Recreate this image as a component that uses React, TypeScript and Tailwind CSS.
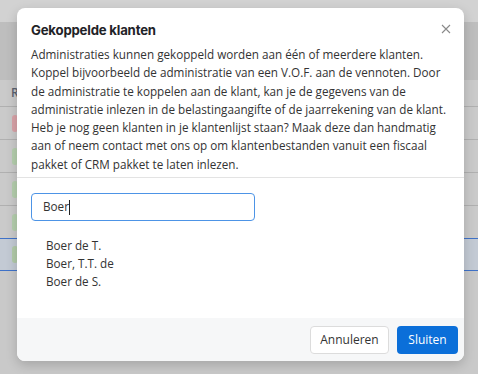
import React from "react";

const rows = [
  { badge: "bg-[#d9a3a8]" },
  { badge: "bg-[#b5cfae]" },
  { badge: "bg-[#b5cfae]" },
  { badge: "bg-[#b5cfae]" },
];

export default function App() {
  return (
    <div
      className="relative w-[478px] h-[374px] overflow-hidden bg-[#c9c9c9]"
      style={{ fontFamily: '"Open Sans", "Noto Sans", sans-serif' }}
    >
      {/* background page (dimmed) */}
      <div className="flex flex-col">
        <div className="h-[22px] bg-[#d2d2d2]" />
        <div className="h-[58px] bg-[#bebebe]" />
        <div className="h-[27px] flex items-center pl-[11px] text-[12px] font-semibold text-[#5b6270] border-b border-[#b0b0b0] bg-[#cacaca]">
          R
        </div>
        {rows.map((r, i) => (
          <div
            key={i}
            className="h-[33px] flex items-center pl-[12px] border-b border-[#b0b0b0] bg-[#cacaca]"
          >
            <div className={`w-[6px] h-[17px] rounded-[3px] ${r.badge}`} />
          </div>
        ))}
        <div className="h-[33px] flex items-center pl-[12px] border-y border-[#3f72c8] bg-[#c3cad4] -mt-px">
          <div className="w-[6px] h-[17px] rounded-[3px] bg-[#b2cba9]" />
        </div>
        <div className="flex-1 bg-[#c9c9c9]" />
      </div>

      {/* modal */}
      <div className="absolute left-[17px] top-[8px] w-[447px] h-[353px] bg-white rounded-[8px] shadow-[0_4px_12px_rgba(0,0,0,0.18)] flex flex-col overflow-hidden">
        <div className="relative px-[14px] pt-[12px] pb-[4px] border-b border-[#e3e3e3]">
          <div
            className="text-[13.2px] leading-[20px] font-bold tracking-[-0.2px] text-[#1f2328]"
            style={{ fontFamily: '"Inter", "Open Sans", sans-serif' }}
          >
            Gekoppelde klanten
          </div>
          <button className="absolute right-[12px] top-[15px] w-[12px] h-[12px] flex items-center justify-center">
            <svg width="10" height="10" viewBox="0 0 10 10">
              <path d="M1 1L9 9M9 1L1 9" stroke="#8a8a8a" strokeWidth="1.1" />
            </svg>
          </button>
          <p className="mt-[5px] text-[11.7px] leading-[18.3px] text-[#333333] whitespace-nowrap">
            Administraties kunnen gekoppeld worden aan één of meerdere klanten.
            <br />
            Koppel bijvoorbeeld de administratie van een V.O.F. aan de vennoten. Door
            <br />
            de administratie te koppelen aan de klant, kan je de gegevens van de
            <br />
            administratie inlezen in de belastingaangifte of de jaarrekening van de klant.
            <br />
            Heb je nog geen klanten in je klantenlijst staan? Maak deze dan handmatig
            <br />
            aan of neem contact met ons op om klantenbestanden vanuit een fiscaal
            <br />
            pakket of CRM pakket te laten inlezen.
          </p>
        </div>

        <div className="flex-1 px-[14px] pt-[15px]">
          <div className="w-[224px] h-[28px] border border-[#4d94e6] rounded-[4px] flex items-center pl-[11px] text-[11.7px] text-[#333333]">
            <span>Boer</span>
            <span className="inline-block w-px h-[15px] bg-[#222]" />
          </div>
          <ul className="mt-[15px] pl-[15px] text-[11.7px] leading-[18px] text-[#333333]">
            <li>Boer de T.</li>
            <li>Boer, T.T. de</li>
            <li>Boer de S.</li>
          </ul>
        </div>

        <div className="h-[43px] bg-[#f6f7f8] flex items-center justify-end gap-[8px] pr-[6px]">
          <button className="h-[28px] w-[79px] bg-white border border-[#dcdcdc] rounded-[4px] text-[12px] text-[#333333]">
            Annuleren
          </button>
          <button className="h-[28px] w-[61px] bg-[#0b6fd9] rounded-[4px] text-[12px] text-white">
            Sluiten
          </button>
        </div>
      </div>
    </div>
  );
}
